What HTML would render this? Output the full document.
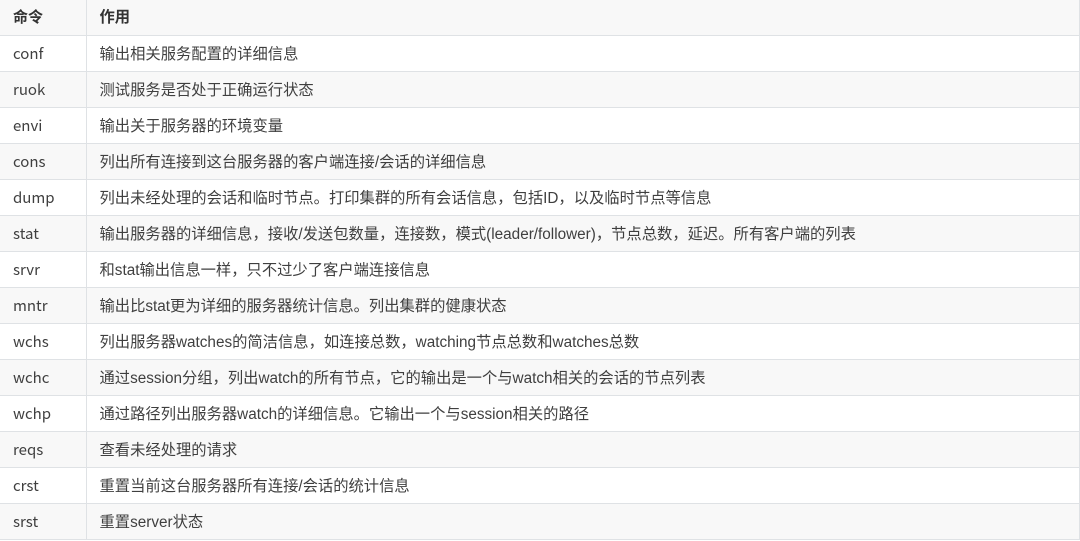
<!DOCTYPE html>
<html><head><meta charset="utf-8"><style>
html,body{margin:0;padding:0;background:#fff;}
table{border-collapse:collapse;width:1080px;font-family:"Liberation Sans","Noto Sans CJK SC",sans-serif;font-size:15.3px;color:#3f3f3f;}
td,th{border:1px solid #dfe2e5;height:35px;line-height:35px;padding:0 0 0 13px;text-align:left;vertical-align:top;white-space:nowrap;overflow:hidden;box-sizing:border-box;}
td:last-child,th:last-child{padding-top:2px;line-height:33px;}
th{font-weight:bold;color:#333;}
tr{height:36px;}
tr:first-child{height:35px;}
tr:first-child th{height:35px;line-height:34px;}
tr:first-child th:last-child{line-height:32px;}
tr:nth-child(odd){background:#f8f8f8;}
td:first-child,th:first-child{width:86px;border-left:none;font-family:"Noto Sans CJK SC","Liberation Sans",sans-serif;font-size:15px;}
tr:first-child th{border-top:none;}
</style></head><body>
<table>
<tr><th>命令</th><th>作用</th></tr>
<tr><td>conf</td><td>输出相关服务配置的详细信息</td></tr>
<tr><td>ruok</td><td>测试服务是否处于正确运行状态</td></tr>
<tr><td>envi</td><td>输出关于服务器的环境变量</td></tr>
<tr><td>cons</td><td>列出所有连接到这台服务器的客户端连接/会话的详细信息</td></tr>
<tr><td>dump</td><td>列出未经处理的会话和临时节点。打印集群的所有会话信息，包括ID，以及临时节点等信息</td></tr>
<tr><td>stat</td><td>输出服务器的详细信息，接收/发送包数量，连接数，模式(leader/follower)，节点总数，延迟。所有客户端的列表</td></tr>
<tr><td>srvr</td><td>和stat输出信息一样，只不过少了客户端连接信息</td></tr>
<tr><td>mntr</td><td>输出比stat更为详细的服务器统计信息。列出集群的健康状态</td></tr>
<tr><td>wchs</td><td>列出服务器watches的简洁信息，如连接总数，watching节点总数和watches总数</td></tr>
<tr><td>wchc</td><td>通过session分组，列出watch的所有节点，它的输出是一个与watch相关的会话的节点列表</td></tr>
<tr><td>wchp</td><td>通过路径列出服务器watch的详细信息。它输出一个与session相关的路径</td></tr>
<tr><td>reqs</td><td>查看未经处理的请求</td></tr>
<tr><td>crst</td><td>重置当前这台服务器所有连接/会话的统计信息</td></tr>
<tr><td>srst</td><td>重置server状态</td></tr>
</table>
</body></html>
